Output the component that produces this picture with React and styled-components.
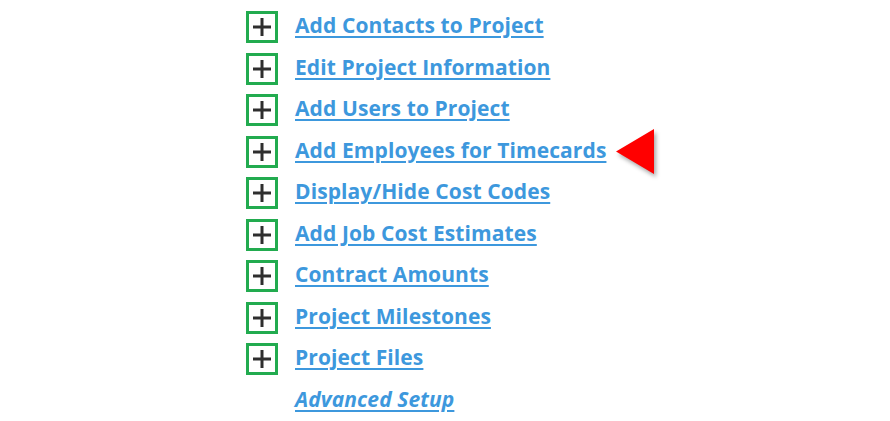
import React from "react"
import styled, { createGlobalStyle } from "styled-components"

const links = [
    "Add Contacts to Project",
    "Edit Project Information",
    "Add Users to Project",
    "Add Employees for Timecards",
    "Display/Hide Cost Codes",
    "Add Job Cost Estimates",
    "Contract Amounts",
    "Project Milestones",
    "Project Files",
]

const App = () => {
    return (
        <Page>
            <Global />
            <List>
                {links.map((label, i) => (
                    <Row key={label}>
                        <PlusBox>
                            <svg width="20" height="20" viewBox="0 0 20 20">
                                <path d="M10 1v18M1 10h18" stroke="#2e2e2e" strokeWidth="3" />
                            </svg>
                        </PlusBox>
                        <Link href="#">{label}</Link>
                        {i === 3 && (
                            <Pointer>
                                <svg width="40" height="45" viewBox="0 0 40 45">
                                    <polygon points="0,22.5 38,0 38,45" fill="#ff0000" />
                                </svg>
                            </Pointer>
                        )}
                    </Row>
                ))}
                <Row>
                    <Spacer />
                    <Link href="#" $italic>Advanced Setup</Link>
                </Row>
            </List>
        </Page>
    )
}

export default App

const Global = createGlobalStyle`
body {
    margin: 0;
    background: #fff;
    font-family: "Open Sans", "Liberation Sans", sans-serif;
}
`
const Page = styled.div`
width: 890px;
height: 421px;
overflow: hidden;
padding: 11px 0 0 246px;
box-sizing: border-box;
`
const List = styled.div`
display: flex;
flex-direction: column;
gap: 9.5px;
`
const Row = styled.div`
display: flex;
align-items: center;
height: 32px;
`
const PlusBox = styled.div`
width: 32px;
height: 32px;
box-sizing: border-box;
border: 3px solid #22ab4f;
display: flex;
align-items: center;
justify-content: center;
`
const Spacer = styled.div`
width: 32px;
`
const Link = styled.a`
margin-left: 17px;
margin-bottom: 4px;
font-size: 21px;
letter-spacing: 0.1px;
font-weight: 700;
font-style: ${(p) => (p.$italic ? "italic" : "normal")};
color: #3d98dd;
text-decoration: underline;
text-decoration-thickness: 2px;
text-underline-offset: 3px;
white-space: nowrap;
`
const Pointer = styled.div`
margin-left: 10px;
display: flex;
filter: drop-shadow(2px 3px 2px rgba(0, 0, 0, 0.35));
`
